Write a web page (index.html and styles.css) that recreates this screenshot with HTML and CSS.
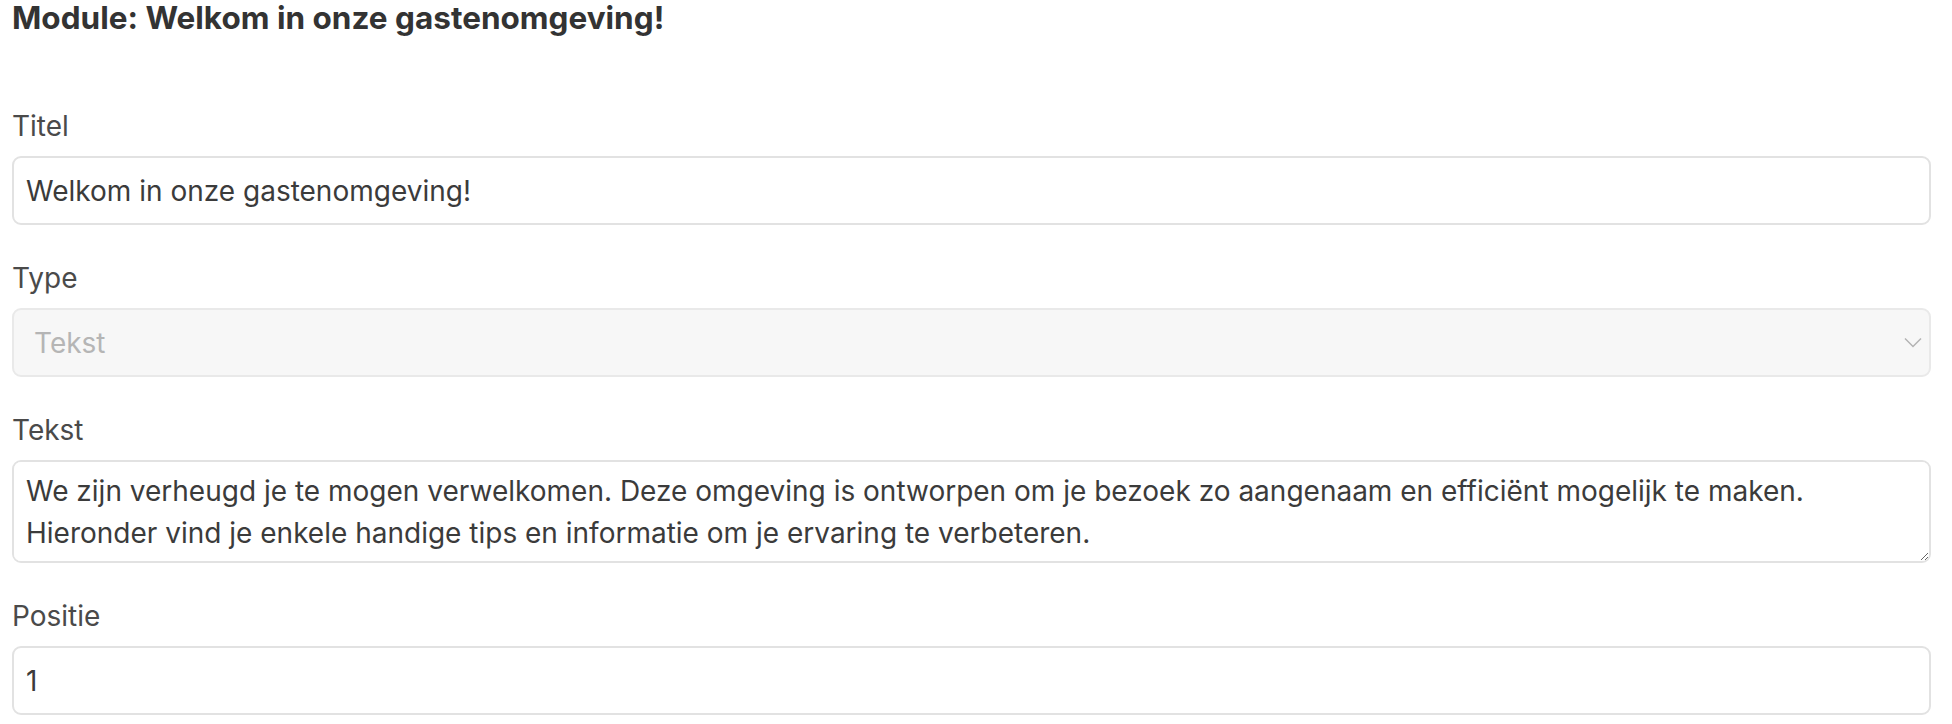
FILE: index.html
```html
<!DOCTYPE html>
<html lang="nl">
<head>
    <meta charset="UTF-8">
    <meta name="viewport" content="width=device-width, initial-scale=1.0">
    <title>Module bewerken</title>
    <link rel="stylesheet" href="styles.css">
</head>
<body>
    <div class="page">
        <h1 class="page-title">Module: Welkom in onze gastenomgeving!</h1>

        <form class="module-form">
            <div class="field">
                <label for="title">Titel</label>
                <input type="text" id="title" name="title" value="Welkom in onze gastenomgeving!">
            </div>

            <div class="field">
                <label for="type">Type</label>
                <div class="select-wrap">
                    <select id="type" name="type" disabled>
                        <option value="text">Tekst</option>
                    </select>
                    <svg class="chevron" width="18" height="11" viewBox="0 0 18 11" fill="none">
                        <path d="M1 1.5l8 8 8-8" stroke="#b3b3b3" stroke-width="1.5"/>
                    </svg>
                </div>
            </div>

            <div class="field">
                <label for="text">Tekst</label>
                <textarea id="text" name="text">We zijn verheugd je te mogen verwelkomen. Deze omgeving is ontworpen om je bezoek zo aangenaam en efficiënt mogelijk te maken.
Hieronder vind je enkele handige tips en informatie om je ervaring te verbeteren.</textarea>
            </div>

            <div class="field">
                <label for="position">Positie</label>
                <input type="number" id="position" name="position" value="1">
            </div>
        </form>
    </div>
</body>
</html>
```

FILE: styles.css
```css
body {
    font-family: Inter, "Noto Sans", Arial, sans-serif;
    background-color: #ffffff;
    color: #3b3b3b;
    margin: 0;
}
.page {
    padding: 0 21px 0 12px;
}
.page-title {
    font-size: 31.5px;
    font-weight: 700;
    line-height: 36px;
    color: #333333;
    margin: 0 0 69px 0;
}
.field {
    margin-bottom: 32px;
}
label {
    display: block;
    font-size: 28px;
    line-height: 36px;
    color: #4a4a4a;
    padding-top: 3px;
    margin-bottom: 12px;
}
input, select, textarea {
    display: block;
    width: 100%;
    box-sizing: border-box;
    font-family: inherit;
    font-size: 28px;
    color: #3b3b3b;
    background: #ffffff;
    border: 2px solid #e2e2e2;
    border-radius: 9px;
    outline: none;
}
input {
    height: 69px;
    padding: 0 12px;
}
input[type=number] {
    -moz-appearance: textfield;
}
input[type=number]::-webkit-inner-spin-button,
input[type=number]::-webkit-outer-spin-button {
    -webkit-appearance: none;
    margin: 0;
}
.select-wrap {
    position: relative;
}
select {
    height: 69px;
    padding: 0 40px 0 20px;
    appearance: none;
    -webkit-appearance: none;
    background: #f7f7f7;
    border-color: #e9e9e9;
    color: #b5b5b5;
    opacity: 1;
}
.chevron {
    position: absolute;
    right: 9px;
    top: 29px;
}
textarea {
    height: 103px;
    padding: 8px 12px;
    line-height: 42px;
    resize: vertical;
}
```
